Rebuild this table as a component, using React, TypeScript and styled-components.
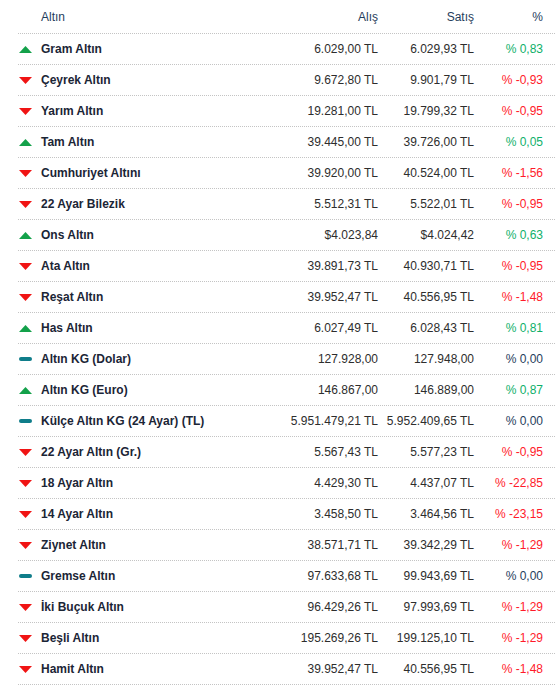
import styled, { createGlobalStyle } from 'styled-components';

type Trend = 'up' | 'down' | 'flat';

interface GoldRow {
    name: string;
    buy: string;
    sell: string;
    change: string;
    trend: Trend;
}

const rows: GoldRow[] = [
    { name: 'Gram Altın', buy: '6.029,00 TL', sell: '6.029,93 TL', change: '% 0,83', trend: 'up' },
    { name: 'Çeyrek Altın', buy: '9.672,80 TL', sell: '9.901,79 TL', change: '% -0,93', trend: 'down' },
    { name: 'Yarım Altın', buy: '19.281,00 TL', sell: '19.799,32 TL', change: '% -0,95', trend: 'down' },
    { name: 'Tam Altın', buy: '39.445,00 TL', sell: '39.726,00 TL', change: '% 0,05', trend: 'up' },
    { name: 'Cumhuriyet Altını', buy: '39.920,00 TL', sell: '40.524,00 TL', change: '% -1,56', trend: 'down' },
    { name: '22 Ayar Bilezik', buy: '5.512,31 TL', sell: '5.522,01 TL', change: '% -0,95', trend: 'down' },
    { name: 'Ons Altın', buy: '$4.023,84', sell: '$4.024,42', change: '% 0,63', trend: 'up' },
    { name: 'Ata Altın', buy: '39.891,73 TL', sell: '40.930,71 TL', change: '% -0,95', trend: 'down' },
    { name: 'Reşat Altın', buy: '39.952,47 TL', sell: '40.556,95 TL', change: '% -1,48', trend: 'down' },
    { name: 'Has Altın', buy: '6.027,49 TL', sell: '6.028,43 TL', change: '% 0,81', trend: 'up' },
    { name: 'Altın KG (Dolar)', buy: '127.928,00', sell: '127.948,00', change: '% 0,00', trend: 'flat' },
    { name: 'Altın KG (Euro)', buy: '146.867,00', sell: '146.889,00', change: '% 0,87', trend: 'up' },
    { name: 'Külçe Altın KG (24 Ayar) (TL)', buy: '5.951.479,21 TL', sell: '5.952.409,65 TL', change: '% 0,00', trend: 'flat' },
    { name: '22 Ayar Altın (Gr.)', buy: '5.567,43 TL', sell: '5.577,23 TL', change: '% -0,95', trend: 'down' },
    { name: '18 Ayar Altın', buy: '4.429,30 TL', sell: '4.437,07 TL', change: '% -22,85', trend: 'down' },
    { name: '14 Ayar Altın', buy: '3.458,50 TL', sell: '3.464,56 TL', change: '% -23,15', trend: 'down' },
    { name: 'Ziynet Altın', buy: '38.571,71 TL', sell: '39.342,29 TL', change: '% -1,29', trend: 'down' },
    { name: 'Gremse Altın', buy: '97.633,68 TL', sell: '99.943,69 TL', change: '% 0,00', trend: 'flat' },
    { name: 'İki Buçuk Altın', buy: '96.429,26 TL', sell: '97.993,69 TL', change: '% -1,29', trend: 'down' },
    { name: 'Beşli Altın', buy: '195.269,26 TL', sell: '199.125,10 TL', change: '% -1,29', trend: 'down' },
    { name: 'Hamit Altın', buy: '39.952,47 TL', sell: '40.556,95 TL', change: '% -1,48', trend: 'down' },
];

const trendColors: Record<Trend, string> = {
    up: '#10b06a',
    down: '#ff1a2a',
    flat: '#1f3d5c',
};

const GlobalStyle = createGlobalStyle`
    body {
        margin: 0;
        background: #ffffff;
        font-family: 'Liberation Sans', Arial, sans-serif;
    }
`;

const Table = styled.div`
    width: 555px;
    padding-left: 18px;
    box-sizing: border-box;
    font-size: 12px;
    color: #2b2b2b;
`;

const Row = styled.div<{ $header?: boolean }>`
    display: grid;
    grid-template-columns: 1fr 100px 96px 69px;
    align-items: center;
    height: ${(p) => (p.$header ? 34 : 31)}px;
    padding-right: 12px;
    border-bottom: 1px dotted #c4c4c4;
    box-sizing: border-box;
`;

const HeadCell = styled.div<{ $right?: boolean }>`
    color: #1f3d5c;
    text-align: ${(p) => (p.$right ? 'right' : 'left')};
    padding-left: ${(p) => (p.$right ? 0 : 23)}px;
`;

const NameCell = styled.div`
    display: flex;
    align-items: center;
    font-weight: bold;
    color: #1b2536;
    white-space: nowrap;
`;

const IconSlot = styled.span`
    width: 22px;
    display: flex;
    align-items: center;
    padding-left: 1px;
`;

const ValueCell = styled.div`
    text-align: right;
    white-space: nowrap;
    color: #2d2d2d;
`;

const ChangeCell = styled.div<{ $trend: Trend }>`
    text-align: right;
    white-space: nowrap;
    color: ${(p) => trendColors[p.$trend]};
`;

const Flat = styled.span`
    display: block;
    width: 13px;
    height: 4px;
    border-radius: 2px;
    background: #0f7d8a;
`;

const TrendIcon: React.FC<{ trend: Trend }> = ({ trend }) => {
    if (trend === 'flat') return <Flat />;
    const up = trend === 'up';
    return (
        <svg width="13" height="7" viewBox="0 0 13 7">
            <polygon
                points={up ? '6.5,0 13,7 0,7' : '0,0 13,0 6.5,7'}
                fill={up ? '#13a14a' : '#f01414'}
            />
        </svg>
    );
};

export default function App() {
    return (
        <>
            <GlobalStyle />
            <Table>
                <Row $header>
                    <HeadCell>Altın</HeadCell>
                    <HeadCell $right>Alış</HeadCell>
                    <HeadCell $right>Satış</HeadCell>
                    <HeadCell $right>%</HeadCell>
                </Row>
                {rows.map((r) => (
                    <Row key={r.name}>
                        <NameCell>
                            <IconSlot>
                                <TrendIcon trend={r.trend} />
                            </IconSlot>
                            {r.name}
                        </NameCell>
                        <ValueCell>{r.buy}</ValueCell>
                        <ValueCell>{r.sell}</ValueCell>
                        <ChangeCell $trend={r.trend}>{r.change}</ChangeCell>
                    </Row>
                ))}
            </Table>
        </>
    );
}
